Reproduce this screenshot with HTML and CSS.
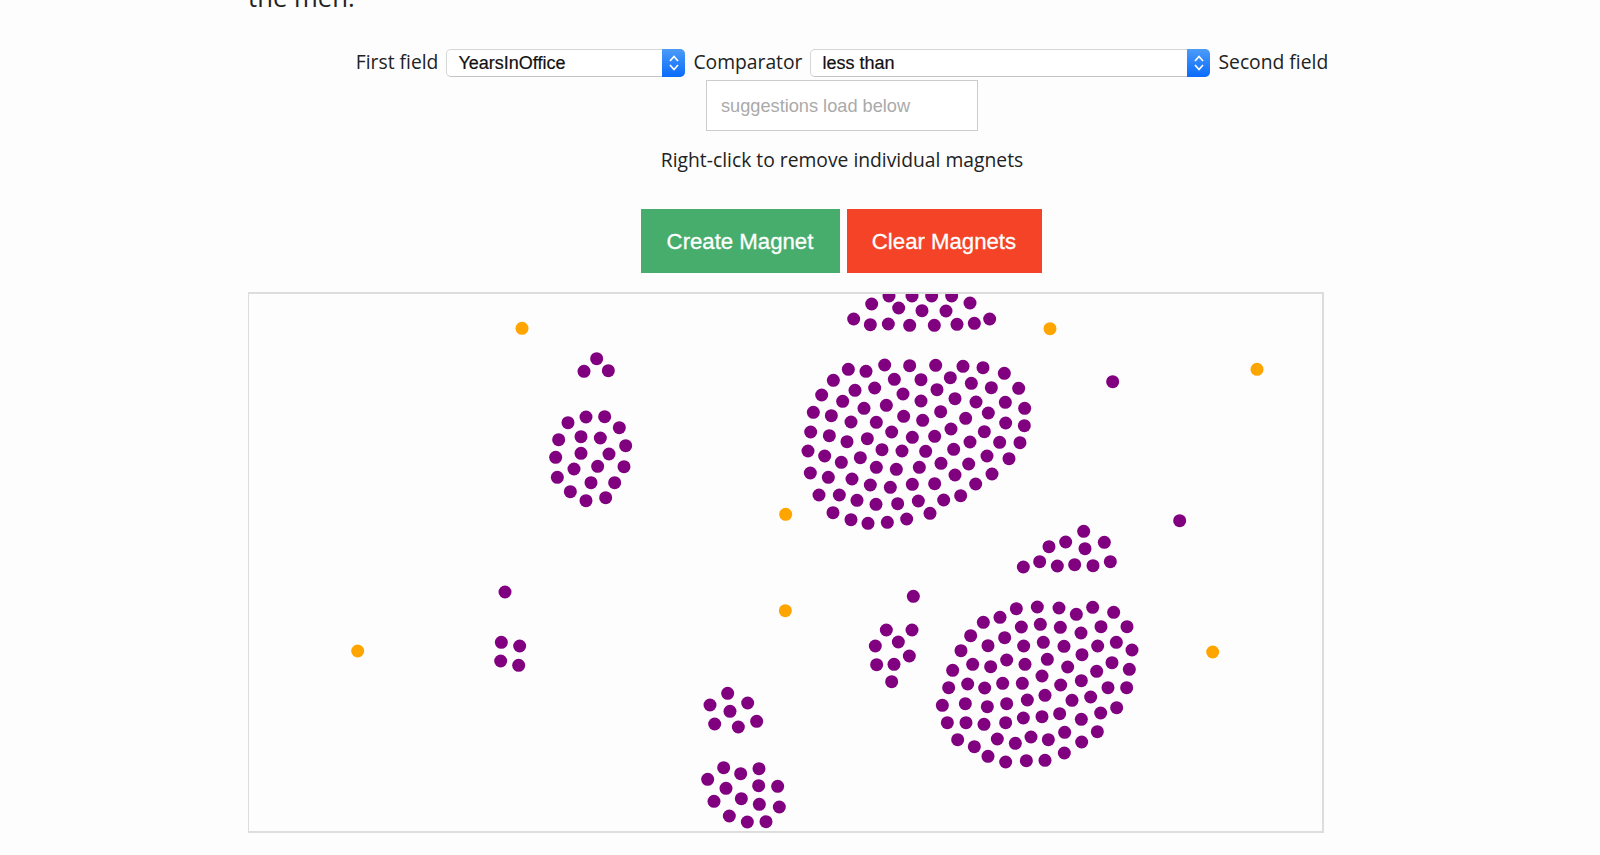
FILE: index.html
```html
<!DOCTYPE html>
<html lang="en">
<head>
    <meta charset="UTF-8">
    <meta name="viewport" content="width=device-width, initial-scale=1.0">
    <title>Magnets</title>
    <link rel="stylesheet" href="styles.css">
</head>
<body>
    <main class="page">
        <p class="intro">the men.</p>

        <div class="controls">
            <span class="field-label">First field</span>
            <div class="select select-first">
                <span class="select-value">YearsInOffice</span>
                <span class="stepper">
                    <svg width="14" height="20" viewBox="0 0 14 20"><path d="M3 8 7 3.500l4 4.500M3 12l4 4.500 4-4.500"/></svg>
                </span>
            </div>
            <span class="field-label">Comparator</span>
            <div class="select select-comparator">
                <span class="select-value">less than</span>
                <span class="stepper">
                    <svg width="14" height="20" viewBox="0 0 14 20"><path d="M3 8 7 3.500l4 4.500M3 12l4 4.500 4-4.500"/></svg>
                </span>
            </div>
            <span class="field-label">Second field</span>
        </div>

        <input class="suggest" type="text" placeholder="suggestions load below">

        <p class="hint">Right-click to remove individual magnets</p>

        <div class="buttons">
            <button type="button" class="btn btn-create">Create Magnet</button>
            <button type="button" class="btn btn-clear">Clear Magnets</button>
        </div>

        <div class="canvas">
            <svg width="1073" height="537" viewBox="249 294 1073 537">
                <!-- each group is one measured area of the chart, in 3x units -->
                <g transform="translate(780 285) scale(0.33333)">
                    <circle cx="327" cy="33"/><circle cx="396" cy="33"/><circle cx="455" cy="33"/><circle cx="515" cy="33"/>
                    <circle cx="275" cy="57"/><circle cx="570" cy="54"/><circle cx="356" cy="69"/><circle cx="426" cy="77"/><circle cx="498" cy="78"/>
                    <circle cx="221" cy="102"/><circle cx="271" cy="119"/><circle cx="325" cy="117"/><circle cx="389" cy="121"/><circle cx="463" cy="121"/><circle cx="531" cy="118"/><circle cx="583" cy="115"/><circle cx="629" cy="102"/>

                    <circle cx="205" cy="253"/><circle cx="258" cy="259"/><circle cx="314" cy="240"/><circle cx="389" cy="242"/><circle cx="467" cy="241"/><circle cx="549" cy="244"/><circle cx="609" cy="248"/><circle cx="673" cy="265"/>
                    <circle cx="160" cy="286"/><circle cx="225" cy="316"/><circle cx="284" cy="309"/><circle cx="343" cy="283"/><circle cx="423" cy="284"/><circle cx="511" cy="278"/><circle cx="574" cy="295"/><circle cx="634" cy="308"/><circle cx="716" cy="310"/>
                    <circle cx="125" cy="330"/><circle cx="188" cy="349"/><circle cx="369" cy="327"/><circle cx="471" cy="314"/><circle cx="423" cy="348"/><circle cx="525" cy="341"/><circle cx="588" cy="351"/><circle cx="676" cy="352"/><circle cx="734" cy="370"/>
                    <circle cx="100" cy="382"/><circle cx="154" cy="392"/><circle cx="252" cy="370"/><circle cx="319" cy="361"/><circle cx="371" cy="394"/><circle cx="428" cy="406"/><circle cx="482" cy="380"/><circle cx="557" cy="400"/><circle cx="625" cy="384"/><circle cx="677" cy="414"/><circle cx="733" cy="422"/>
                    <circle cx="92" cy="441"/><circle cx="148" cy="452"/><circle cx="213" cy="411"/><circle cx="289" cy="412"/><circle cx="335" cy="441"/><circle cx="397" cy="457"/><circle cx="464" cy="454"/><circle cx="513" cy="432"/><circle cx="613" cy="440"/><circle cx="570" cy="471"/><circle cx="659" cy="472"/><circle cx="720" cy="473"/>
                    <circle cx="84" cy="498"/><circle cx="134" cy="513"/><circle cx="201" cy="470"/><circle cx="262" cy="461"/><circle cx="306" cy="494"/><circle cx="366" cy="498"/><circle cx="437" cy="499"/><circle cx="521" cy="493"/><circle cx="621" cy="513"/><circle cx="687" cy="521"/>
                    <circle cx="91" cy="564"/><circle cx="145" cy="577"/><circle cx="184" cy="532"/><circle cx="241" cy="518"/><circle cx="289" cy="547"/><circle cx="349" cy="553"/><circle cx="418" cy="547"/><circle cx="483" cy="535"/><circle cx="566" cy="537"/><circle cx="636" cy="567"/>
                    <circle cx="117" cy="630"/><circle cx="178" cy="630"/><circle cx="216" cy="582"/><circle cx="271" cy="600"/><circle cx="331" cy="607"/><circle cx="397" cy="598"/><circle cx="464" cy="596"/><circle cx="525" cy="570"/><circle cx="587" cy="597"/>
                    <circle cx="159" cy="683"/><circle cx="231" cy="646"/><circle cx="288" cy="658"/><circle cx="353" cy="656"/><circle cx="415" cy="648"/><circle cx="491" cy="645"/><circle cx="542" cy="632"/>
                    <circle cx="213" cy="704"/><circle cx="264" cy="715"/><circle cx="322" cy="712"/><circle cx="380" cy="702"/><circle cx="450" cy="685"/>

                    <circle class="magnet" cx="810" cy="131"/><circle class="magnet" cx="17" cy="688"/>
                </g>

                <g transform="translate(920 510) scale(0.33333)">
                    <circle cx="491" cy="64"/><circle cx="437" cy="96"/><circle cx="387" cy="110"/><circle cx="553" cy="97"/><circle cx="495" cy="116"/><circle cx="310" cy="171"/><circle cx="359" cy="155"/><circle cx="412" cy="168"/><circle cx="464" cy="164"/><circle cx="519" cy="167"/><circle cx="571" cy="155"/>

                    <circle cx="289" cy="296"/><circle cx="352" cy="291"/><circle cx="417" cy="294"/><circle cx="469" cy="313"/><circle cx="518" cy="292"/><circle cx="581" cy="307"/>
                    <circle cx="190" cy="337"/><circle cx="240" cy="322"/><circle cx="304" cy="351"/><circle cx="361" cy="343"/><circle cx="421" cy="352"/><circle cx="483" cy="369"/><circle cx="543" cy="350"/><circle cx="621" cy="350"/>
                    <circle cx="152" cy="377"/><circle cx="254" cy="383"/><circle cx="204" cy="407"/><circle cx="311" cy="408"/><circle cx="370" cy="397"/><circle cx="432" cy="409"/><circle cx="533" cy="408"/><circle cx="589" cy="397"/><circle cx="636" cy="420"/>
                    <circle cx="123" cy="422"/><circle cx="486" cy="434"/><circle cx="158" cy="463"/><circle cx="212" cy="470"/><circle cx="260" cy="450"/><circle cx="315" cy="463"/><circle cx="382" cy="448"/><circle cx="443" cy="471"/><circle cx="576" cy="458"/><circle cx="530" cy="484"/><circle cx="628" cy="478"/>
                    <circle cx="98" cy="481"/><circle cx="86" cy="533"/><circle cx="143" cy="522"/><circle cx="194" cy="534"/><circle cx="248" cy="520"/><circle cx="307" cy="520"/><circle cx="366" cy="498"/><circle cx="422" cy="525"/><circle cx="484" cy="512"/><circle cx="564" cy="533"/><circle cx="620" cy="533"/>
                    <circle cx="67" cy="586"/><circle cx="136" cy="581"/><circle cx="202" cy="590"/><circle cx="260" cy="581"/><circle cx="322" cy="570"/><circle cx="375" cy="556"/><circle cx="456" cy="571"/><circle cx="512" cy="561"/><circle cx="590" cy="593"/>
                    <circle cx="82" cy="638"/><circle cx="138" cy="638"/><circle cx="192" cy="643"/><circle cx="257" cy="638"/><circle cx="310" cy="624"/><circle cx="366" cy="620"/><circle cx="419" cy="611"/><circle cx="484" cy="628"/><circle cx="542" cy="609"/>
                    <circle cx="113" cy="689"/><circle cx="163" cy="710"/><circle cx="232" cy="687"/><circle cx="286" cy="700"/><circle cx="333" cy="681"/><circle cx="385" cy="689"/><circle cx="434" cy="667"/><circle cx="485" cy="696"/><circle cx="532" cy="665"/>
                    <circle cx="204" cy="739"/><circle cx="257" cy="756"/><circle cx="319" cy="752"/><circle cx="375" cy="751"/><circle cx="433" cy="729"/>

                    <circle cx="779" cy="32"/>
                    <circle class="magnet" cx="878" cy="426"/>
                </g>

                <g transform="translate(480 300) scale(0.33333)">
                    <circle cx="350" cy="176"/><circle cx="312" cy="214"/><circle cx="385" cy="212"/>
                    <circle cx="264" cy="368"/><circle cx="318" cy="351"/><circle cx="374" cy="350"/><circle cx="418" cy="383"/><circle cx="236" cy="419"/><circle cx="303" cy="410"/><circle cx="361" cy="414"/><circle cx="437" cy="437"/>
                    <circle cx="227" cy="472"/><circle cx="303" cy="460"/><circle cx="387" cy="462"/><circle cx="353" cy="499"/><circle cx="432" cy="500"/><circle cx="282" cy="507"/><circle cx="232" cy="532"/><circle cx="333" cy="548"/><circle cx="404" cy="548"/>
                    <circle cx="271" cy="575"/><circle cx="318" cy="602"/><circle cx="377" cy="593"/>

                    <circle class="magnet" cx="126" cy="85"/>
                </g>

                <g transform="translate(680 580) scale(0.33333)">
                    <circle cx="700" cy="49"/><circle cx="619" cy="150"/><circle cx="696" cy="150"/><circle cx="586" cy="198"/><circle cx="655" cy="186"/><circle cx="688" cy="228"/><circle cx="590" cy="254"/><circle cx="642" cy="253"/><circle cx="635" cy="305"/>
                    <circle cx="143" cy="340"/><circle cx="90" cy="375"/><circle cx="203" cy="369"/><circle cx="150" cy="394"/><circle cx="104" cy="432"/><circle cx="175" cy="441"/><circle cx="230" cy="424"/>
                    <circle cx="131" cy="563"/><circle cx="83" cy="598"/><circle cx="182" cy="581"/><circle cx="237" cy="566"/><circle cx="138" cy="625"/><circle cx="236" cy="617"/><circle cx="293" cy="619"/><circle cx="102" cy="664"/><circle cx="184" cy="656"/><circle cx="238" cy="673"/><circle cx="298" cy="681"/><circle cx="148" cy="708"/><circle cx="202" cy="726"/><circle cx="258" cy="725"/>

                    <circle class="magnet" cx="316" cy="92"/>
                </g>

                <g transform="translate(240 560) scale(0.33333)">
                    <circle cx="795" cy="96"/><circle cx="784" cy="247"/><circle cx="839" cy="258"/><circle cx="782" cy="303"/><circle cx="836" cy="316"/>

                    <circle class="magnet" cx="353" cy="273"/>
                </g>

                <g transform="translate(1040 300) scale(0.33333)">
                    <circle cx="218" cy="245"/>
                    <circle class="magnet" cx="651" cy="208"/>
                </g>
            </svg>
        </div>
    </main>
</body>
</html>
```

FILE: styles.css
```css
body {
    margin: 0;
    background-color: #fdfdfd;
    color: #222;
    font-family: "Open Sans", sans-serif;
    font-size: 19.3px;
    overflow: hidden;
}
.page {
    width: 1188px;
    height: 855px;
    margin-left: 248px;
    text-align: center;
    overflow: hidden;
}
.intro {
    margin: -21px 0 0;
    height: 70px;
    line-height: 38px;
    font-size: 25.7px;
    text-align: left;
}
.controls {
    display: flex;
    justify-content: center;
    align-items: center;
    gap: 8px;
    height: 28px;
}
.field-label {
    line-height: 26px;
    padding-bottom: 2px;
}
.select {
    display: flex;
    justify-content: space-between;
    align-items: stretch;
    box-sizing: border-box;
    height: 28px;
    border: 1px solid #d6d6d6;
    border-bottom-color: #c4c4c4;
    border-radius: 5px;
    background-color: white;
    font-family: "Liberation Sans", Arial, sans-serif;
    font-size: 18px;
    color: #111;
    -webkit-text-stroke: 0.2px #111;
}
.select-first {
    width: 239px;
}
.select-comparator {
    width: 400px;
}
.select-value {
    padding-left: 11px;
    line-height: 26px;
}
.stepper {
    display: flex;
    align-items: center;
    justify-content: center;
    width: 23px;
    margin: -1px -1px -1px 0;
    border-radius: 0 5px 5px 0;
    background: linear-gradient(#4c9bf8, #0a6bfb);
}
.stepper svg {
    fill: none;
    stroke: white;
    stroke-width: 1.7;
}
.suggest {
    display: block;
    box-sizing: border-box;
    width: 272px;
    height: 51px;
    margin: 3px auto 0;
    padding: 2px 15px 0 14px;
    border: 1px solid #ccc;
    background-color: white;
    font-family: "Liberation Sans", Arial, sans-serif;
    font-size: 18.2px;
    outline: none;
}
.suggest::placeholder {
    color: #aaa;
    opacity: 1;
}
.hint {
    margin: 15px 0 0;
    line-height: 28px;
}
.buttons {
    display: flex;
    justify-content: center;
    gap: 7px;
    margin-top: 35px;
    padding-right: 2px;
}
.btn {
    height: 64px;
    padding-top: 2px;
    border: none;
    color: white;
    font-family: "Liberation Sans", Arial, sans-serif;
    font-size: 22.2px;
    -webkit-text-stroke: 0.3px white;
    cursor: pointer;
}
.btn-create {
    width: 199px;
    background-color: #46ad6c;
}
.btn-clear {
    width: 195px;
    background-color: #f44326;
}
.canvas {
    box-sizing: border-box;
    width: 1077px;
    height: 541px;
    margin: 19px 0 0 -1px;
    border: 2px solid #ddd;
    background-color: #fdfdfd;
}
.canvas svg {
    display: block;
}
.canvas circle {
    r: 19.5px;
    fill: #800080;
}
.canvas circle.magnet {
    fill: #ffa500;
}
```
